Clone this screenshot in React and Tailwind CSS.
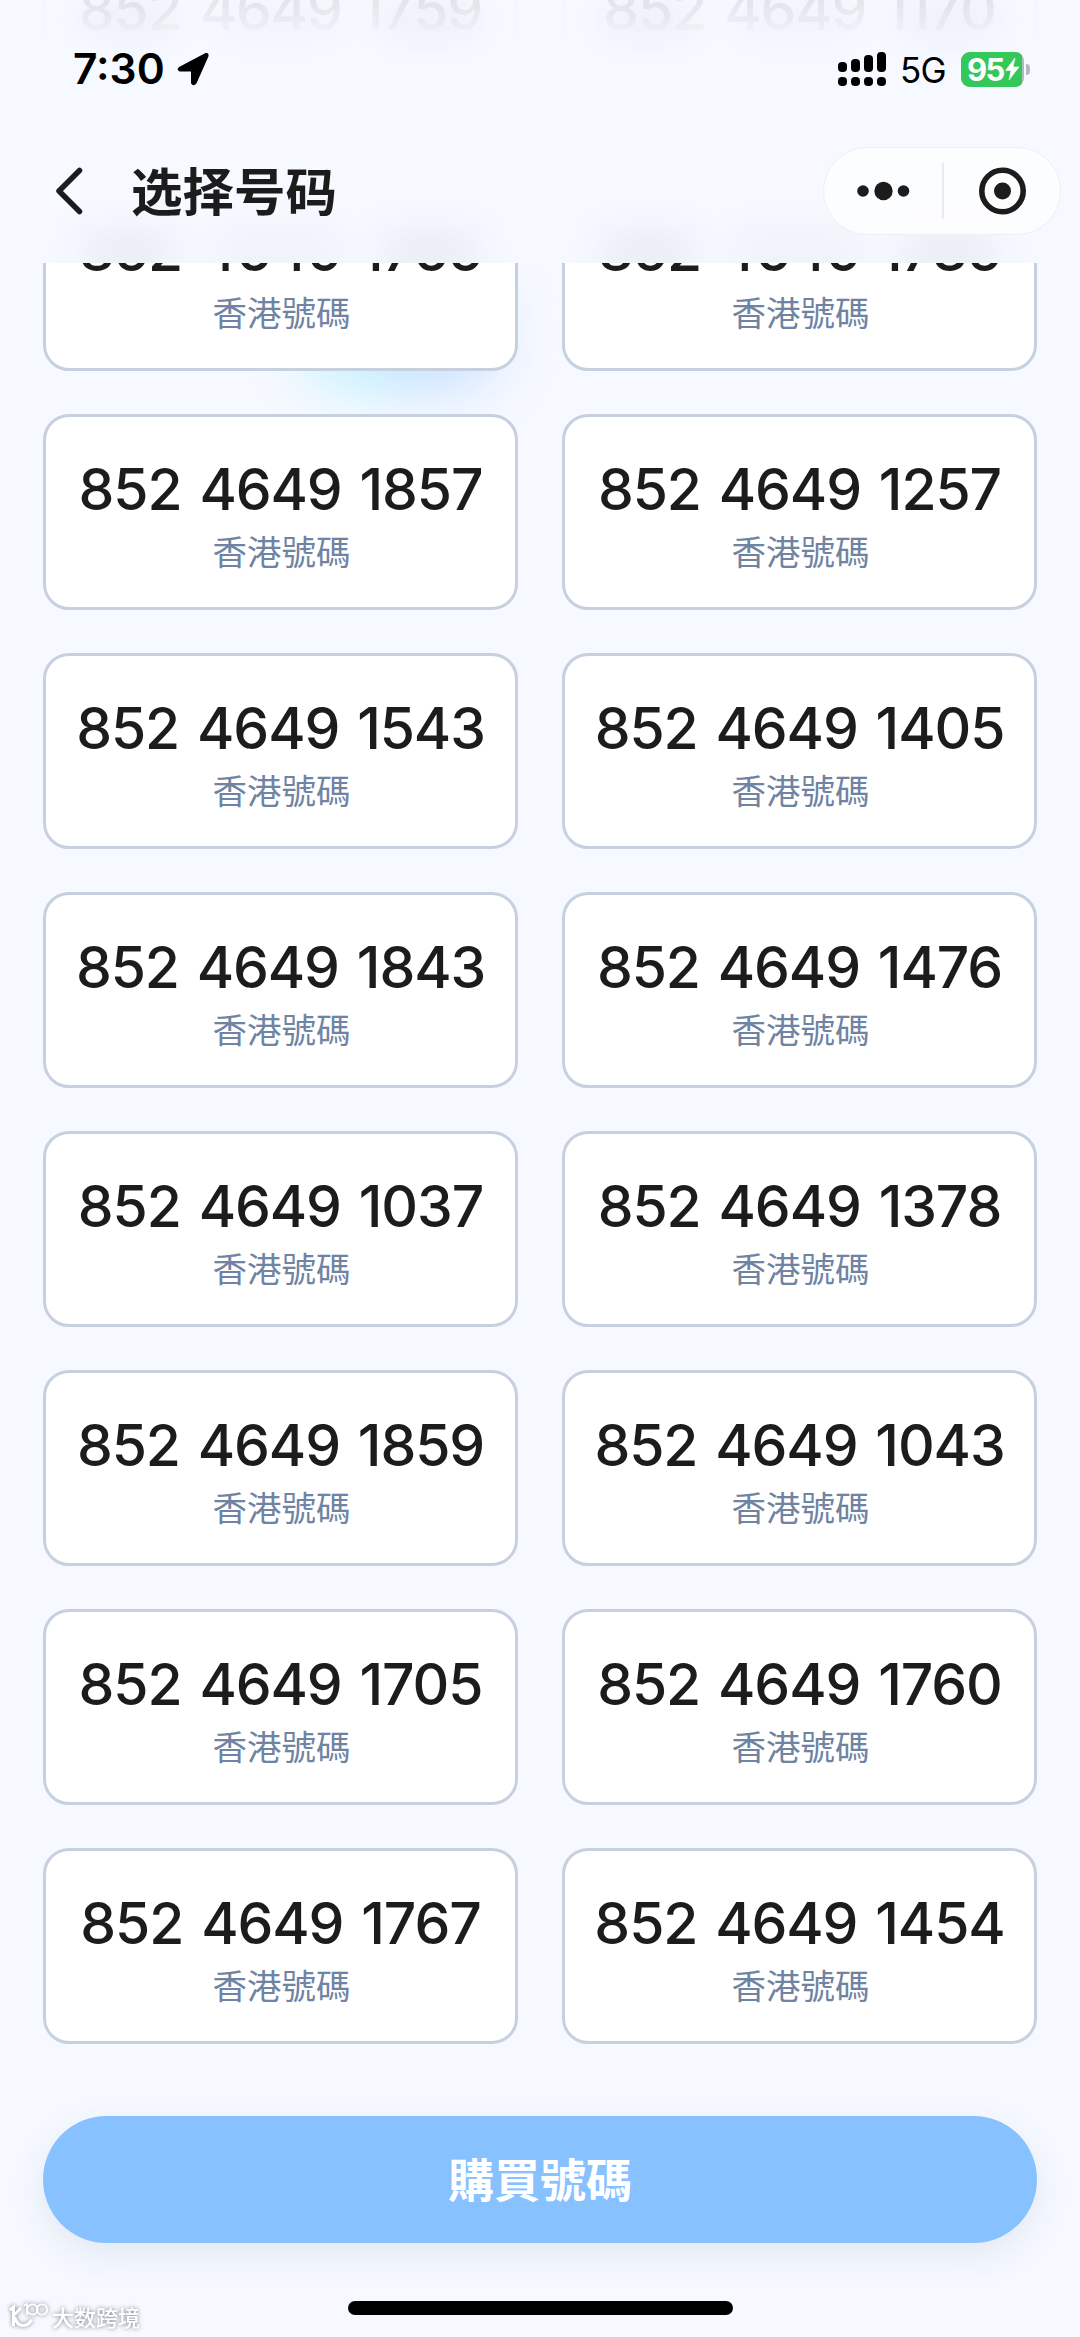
import { useState } from "react";

// already scrolled under the status bar
const passedNumbers = ["852 4649 1759", "852 4649 1170"];

const numbers = [
  "852 4649 1765",
  "852 4649 1735",
  "852 4649 1857",
  "852 4649 1257",
  "852 4649 1543",
  "852 4649 1405",
  "852 4649 1843",
  "852 4649 1476",
  "852 4649 1037",
  "852 4649 1378",
  "852 4649 1859",
  "852 4649 1043",
  "852 4649 1705",
  "852 4649 1760",
  "852 4649 1767",
  "852 4649 1454",
];

const signalBars = [10, 13, 17, 20];

function NumberCard({ number, active, onClick }) {
  return (
    <button
      onClick={onClick}
      className={`h-[196px] rounded-[26px] border-3 bg-white flex flex-col items-center pt-[39px] ${
        active ? "border-[#86c1ff]" : "border-[#c6d0df]"
      }`}
    >
      <span className="font-['Inter',sans-serif] font-medium text-[57px] leading-[68px] tracking-[-1.1px] [word-spacing:3.8px] whitespace-nowrap text-[#1c1c1c]">
        {number}
      </span>
      <span className="mt-[4px] pl-[2px] font-['Noto_Sans_CJK_TC',sans-serif] text-[34.5px] leading-[44px] text-[#6f83a3]">
        香港號碼
      </span>
    </button>
  );
}

// soft shadows of the digits behind the frosted header
function Haze() {
  return (
    <div className="flex justify-between px-[36px] h-[40px] blur-[18px]">
      <div className="w-[100px] rounded-full bg-[#1c1c1c]/6" />
      <div className="w-[130px] rounded-full bg-[#1c1c1c]/4" />
      <div className="w-[105px] rounded-full bg-[#1c1c1c]/6" />
    </div>
  );
}

function StatusBar() {
  return (
    <div className="relative h-[70px] mt-[34px] pl-[73px] pr-[50px] flex items-center justify-between">
      <div className="flex items-center">
        <span className="font-['Inter',sans-serif] font-semibold text-[42.5px] leading-none text-black">
          7:30
        </span>
        <svg className="ml-[10px] w-[35px] h-[36px]" viewBox="0 0 35 36">
          <path
            d="M31 3 L4.500 17 Q2.500 18.500 5 19.500 L17 19.500 L17 32 Q18.500 34.500 20.500 32 L32.500 5 Q33 2.500 31 3Z"
            fill="#000"
            stroke="#000"
            strokeWidth="2"
            strokeLinejoin="round"
          />
        </svg>
      </div>

      <div className="flex items-center">
        <div className="flex items-end gap-[4px]">
          {signalBars.map((h) => (
            <div key={h} className="flex flex-col gap-[5px] w-[9px]">
              <div className="rounded-[4px] bg-black" style={{ height: h }} />
              <div className="h-[9px] rounded-[4px] bg-black" />
            </div>
          ))}
        </div>
        <span className="ml-[14px] mt-[2px] w-[47px] font-['Inter',sans-serif] text-[35px] leading-none text-black tracking-[-0.8px]">
          5G
        </span>
        <div className="ml-[14px] w-[63px] h-[35px] rounded-[9px] bg-[#b5b8bd] overflow-hidden">
          <div className="w-[61px] h-full bg-[#34c759] flex items-center pl-[6px]">
            <span className="font-['Inter',sans-serif] font-bold text-[31px] leading-none text-white tracking-[-1.6px]">
              95
            </span>
            <svg className="w-[16px] h-[24px]" viewBox="0 0 15 24">
              <path
                d="M10.500 1 L1 13.500 H6.500 L4.500 23 L14.500 10 H8.500Z"
                fill="#fff"
                stroke="#fff"
                strokeWidth="0.600"
              />
            </svg>
          </div>
        </div>
        <div className="ml-[2px] w-[4px] h-[11px] rounded-r-full bg-[#b5b8bd]" />
      </div>
    </div>
  );
}

function NavBar() {
  return (
    <div className="relative h-[88px] mt-[43px] pl-[54px] pr-[19px] flex items-center">
      <svg className="w-[30px] h-[50px]" viewBox="0 0 30 50">
        <path
          d="M25.500 4.500 L5 25 L25.500 45.500"
          fill="none"
          stroke="#1c1c1c"
          strokeWidth="5.500"
          strokeLinecap="round"
          strokeLinejoin="round"
        />
      </svg>
      <h1 className="ml-[47px] pb-[4px] font-['Noto_Sans_CJK_SC',sans-serif] font-bold text-[51.5px] leading-[76px] text-[#1c1c1c]">
        选择号码
      </h1>
      <div className="ml-auto w-[238px] h-[88px] rounded-full border border-[#edeff3] bg-white/70 flex items-center">
        <svg className="w-[118px] h-[60px]" viewBox="0 0 118 60">
          <circle cx="39" cy="30" r="5.800" fill="#1c1c1c" />
          <circle cx="59.500" cy="30" r="9.200" fill="#1c1c1c" />
          <circle cx="79.500" cy="30" r="5.800" fill="#1c1c1c" />
        </svg>
        <div className="w-[2px] h-[56px] bg-[#e9ebef]" />
        <svg className="w-[116px] h-[60px]" viewBox="0 0 116 60">
          <circle
            cx="58.500"
            cy="30"
            r="20.700"
            fill="none"
            stroke="#1c1c1c"
            strokeWidth="5.600"
          />
          <circle cx="58.500" cy="30" r="8.500" fill="#1c1c1c" />
        </svg>
      </div>
    </div>
  );
}

export default function App() {
  const [selected, setSelected] = useState(null);

  return (
    <div className="relative flow-root w-[1080px] h-[2337px] overflow-hidden bg-[#f6f9ff]">
      {/* GLOW */}
      <div className="absolute left-[295px] top-[280px] w-[140px] h-[115px] rounded-full bg-[#b5f0ff]/60 blur-[22px]" />
      <div className="absolute left-[375px] top-[275px] w-[130px] h-[120px] rounded-full bg-[#bfdcff]/65 blur-[24px]" />

      {/* LIST */}
      <main className="relative mt-[175px] px-[43px] grid grid-cols-2 gap-x-[44px] gap-y-[43px]">
        {numbers.map((number) => (
          <NumberCard
            key={number}
            number={number}
            active={selected === number}
            onClick={() => setSelected(number)}
          />
        ))}
      </main>

      {/* HEADER */}
      <header className="absolute inset-x-0 top-0 h-[263px] overflow-hidden bg-[#f6f9ff]">
        <div className="absolute inset-x-0 top-0 px-[43px] grid grid-cols-2 gap-x-[44px] opacity-60">
          <Haze />
          <Haze />
        </div>
        <div className="absolute inset-x-0 -bottom-[8px] px-[43px] grid grid-cols-2 gap-x-[44px]">
          <Haze />
          <Haze />
        </div>

        <div className="absolute inset-x-0 top-0 px-[43px] grid grid-cols-2 gap-x-[44px] h-[60px] overflow-hidden opacity-8 [mask-image:linear-gradient(to_bottom,black,transparent_70%)]">
          {passedNumbers.map((number) => (
            <div
              key={number}
              className="h-[86px] border-x-3 border-[#c6d0df] -mt-[24px] flex justify-center font-['Inter',sans-serif] font-medium text-[57px] leading-[68px] tracking-[-1.1px] [word-spacing:3.8px] whitespace-nowrap text-[#1c1c1c]"
            >
              {number}
            </div>
          ))}
        </div>

        <StatusBar />
        <NavBar />
      </header>

      {/* BUTTON */}
      <footer className="relative mt-[72px] px-[43px] flex flex-col items-center">
        <button className="w-full h-[127px] rounded-full bg-[#87c1ff] shadow-[0_12px_36px_rgba(60,90,130,0.10)] pb-[6px] font-['Noto_Sans_CJK_TC',sans-serif] font-bold text-[46px] leading-none text-white">
          購買號碼
        </button>
        <div className="mt-[58px] w-[385px] h-[14px] rounded-full bg-black" />
      </footer>

      {/* WATERMARK */}
      <div className="absolute left-[9px] bottom-[7px] flex items-center text-white drop-shadow-[0_0_2px_rgba(90,95,105,0.8)]">
        <svg className="w-[41px] h-[28px]" viewBox="0 0 41 28" fill="none" stroke="#fff">
          <path d="M1 8 L4.500 5 V24" strokeWidth="3" />
          <path d="M12 6 L5.500 12.500" strokeWidth="3" />
          <path d="M5.500 15 Q8 23.500 14 23.500 Q20 23.500 22.500 17.500" strokeWidth="3.200" />
          <path d="M15 3.500 L18 2 V13" strokeWidth="1.800" />
          <circle cx="23.500" cy="7.500" r="5.200" strokeWidth="1.800" />
          <circle cx="33" cy="7.500" r="5.200" strokeWidth="1.800" />
        </svg>
        <span className="ml-[2px] font-['Noto_Sans_CJK_SC',sans-serif] font-medium text-[22px] leading-[28px]">
          大数跨境
        </span>
      </div>
    </div>
  );
}
